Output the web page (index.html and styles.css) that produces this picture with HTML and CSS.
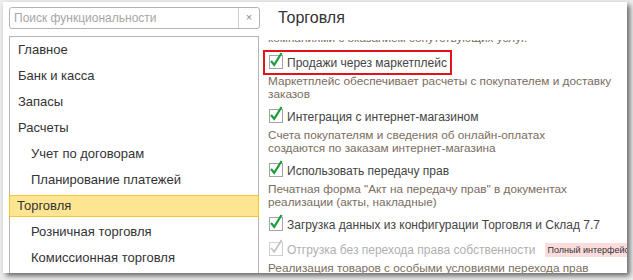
FILE: index.html
```html
<!DOCTYPE html>
<html lang="ru">
<head>
  <meta charset="UTF-8">
  <title>Функциональность</title>
  <link rel="stylesheet" href="styles.css">
</head>
<body>

  <div class="window">
    <div class="side">
      <div class="search">
        <span class="search-text">Поиск функциональности</span>
        <span class="search-clear">×</span>
      </div>
      <ul class="nav">
        <li class="nav-item">Главное</li>
        <li class="nav-item">Банк и касса</li>
        <li class="nav-item">Запасы</li>
        <li class="nav-item">Расчеты</li>
        <li class="nav-item sub">Учет по договорам</li>
        <li class="nav-item sub">Планирование платежей</li>
        <li class="nav-item active">Торговля</li>
        <li class="nav-item sub">Розничная торговля</li>
        <li class="nav-item sub">Комиссионная торговля</li>
      </ul>
    </div>

    <div class="main">
      <h1 class="title">Торговля</h1>
      <div class="content">
        <p class="note cut">компаниями с оказанием сопутствующих услуг.</p>

        <div class="option">
          <div class="check-row marked">
            <svg class="box" width="14" height="17" viewBox="0 0 14 17"><rect x="0.5" y="3.5" width="13" height="13" fill="#fff" stroke="#a3a3a3"/><path d="M2 9 L5.2 12.8 L12.6 1" fill="none" stroke="#1f9d3c" stroke-width="2.2"/></svg>
            <span>Продажи через маркетплейс</span>
          </div>
          <p class="note">Маркетплейс обеспечивает расчеты с покупателем и доставку<br>заказов</p>
        </div>

        <div class="option">
          <div class="check-row">
            <svg class="box" width="14" height="17" viewBox="0 0 14 17"><rect x="0.5" y="3.5" width="13" height="13" fill="#fff" stroke="#a3a3a3"/><path d="M2 9 L5.2 12.8 L12.6 1" fill="none" stroke="#1f9d3c" stroke-width="2.2"/></svg>
            <span>Интеграция с интернет-магазином</span>
          </div>
          <p class="note">Счета покупателям и сведения об онлайн-оплатах<br>создаются по заказам интернет-магазина</p>
        </div>

        <div class="option">
          <div class="check-row">
            <svg class="box" width="14" height="17" viewBox="0 0 14 17"><rect x="0.5" y="3.5" width="13" height="13" fill="#fff" stroke="#a3a3a3"/><path d="M2 9 L5.2 12.8 L12.6 1" fill="none" stroke="#1f9d3c" stroke-width="2.2"/></svg>
            <span>Использовать передачу прав</span>
          </div>
          <p class="note">Печатная форма "Акт на передачу прав" в документах<br>реализации (акты, накладные)</p>
        </div>

        <div class="option bare">
          <div class="check-row">
            <svg class="box" width="14" height="17" viewBox="0 0 14 17"><rect x="0.5" y="3.5" width="13" height="13" fill="#fff" stroke="#a3a3a3"/><path d="M2 9 L5.2 12.8 L12.6 1" fill="none" stroke="#1f9d3c" stroke-width="2.2"/></svg>
            <span>Загрузка данных из конфигурации Торговля и Склад 7.7</span>
          </div>
        </div>

        <div class="option">
          <div class="check-row disabled">
            <svg class="box" width="14" height="17" viewBox="0 0 14 17"><rect x="0.5" y="3.5" width="13" height="13" fill="#fff" stroke="#cfcfcf"/><path d="M2 9 L5.2 12.8 L12.6 1" fill="none" stroke="#c4c4c4" stroke-width="1.8"/></svg>
            <span>Отгрузка без перехода права собственности</span>
            <span class="badge">Полный интерфейс</span>
          </div>
          <p class="note">Реализация товаров с особыми условиями перехода прав</p>
        </div>
      </div>
    </div>
  </div>

</body>
</html>
```

FILE: styles.css
```css
body {
  margin: 0;
  padding: 2px 6px 7px 3px;
  background-color: #ececec;
  font-family: "Liberation Sans", Arial, sans-serif;
  height: 280px;
  box-sizing: border-box;
  overflow: hidden;
}

.window {
  display: flex;
  gap: 3px;
  height: 271px;
  background-color: #fff;
  box-shadow: 3px 3px 5px rgba(0,0,0,0.55);
  overflow: hidden;
}

/* left column */
.side {
  width: 251px;
  flex-shrink: 0;
  padding: 5px 0 0 6px;
}

.search {
  display: flex;
  height: 22px;
  box-sizing: border-box;
  border: 1px solid #b4b4b4;
  border-radius: 3px;
  font-size: 12px;
}

.search-text {
  flex: 1;
  padding-left: 4px;
  line-height: 20px;
  color: #a6a6a6;
}

.search-clear {
  width: 20px;
  border-left: 1px solid #cfcfcf;
  text-align: center;
  line-height: 19px;
  color: #8a8a8a;
  font-size: 11px;
}

.nav {
  list-style: none;
  margin: 7px 1px 0 0;
  padding: 2px 0 0;
  border: 1px solid #b4b4b4;
  border-bottom: none;
  height: 244px;
}

.nav-item {
  height: 22px;
  line-height: 22px;
  margin-bottom: 4px;
  padding-left: 8px;
  font-size: 13px;
  color: #333;
  white-space: nowrap;
}

.nav-item.sub {
  padding-left: 21px;
}

.nav-item.active {
  margin: 0 -1px 4px;
  padding-left: 7px;
  height: 22px;
  line-height: 20px;
  box-sizing: border-box;
  background-color: #fde592;
  border: 1px solid #f3c52e;
}

/* right column */
.main {
  flex: 1;
  min-width: 0;
  display: flex;
  flex-direction: column;
}

.title {
  margin: 0;
  height: 38px;
  box-sizing: border-box;
  padding: 6px 0 0 15px;
  font-size: 16px;
  line-height: 20px;
  font-weight: normal;
  color: #333;
}

.content {
  flex: 1;
  overflow: hidden;
}

.note {
  margin: 0 0 0 5px;
  font-size: 11.8px;
  line-height: 13px;
  color: #7a6d60;
  white-space: nowrap;
}

.note.cut {
  margin-top: -8px;
  margin-bottom: 5px;
}

.option {
  margin-bottom: 3px;
}

.option.bare {
  margin-bottom: 0;
}

.check-row {
  display: inline-flex;
  align-items: center;
  gap: 4px;
  height: 25px;
  box-sizing: border-box;
  padding: 0 3px 0 4px;
  border: 2px solid transparent;
  font-size: 12px;
  color: #444;
  white-space: nowrap;
}

.check-row .box {
  margin-top: -4px;
  flex-shrink: 0;
}

.check-row.marked {
  border-color: #e4131b;
}

.check-row.disabled {
  color: #b0b0b0;
}

.badge {
  margin-left: 6px;
  padding: 1px 2px;
  background-color: #fcdcdc;
  color: #333;
  font-size: 9px;
  line-height: 12px;
}
```
